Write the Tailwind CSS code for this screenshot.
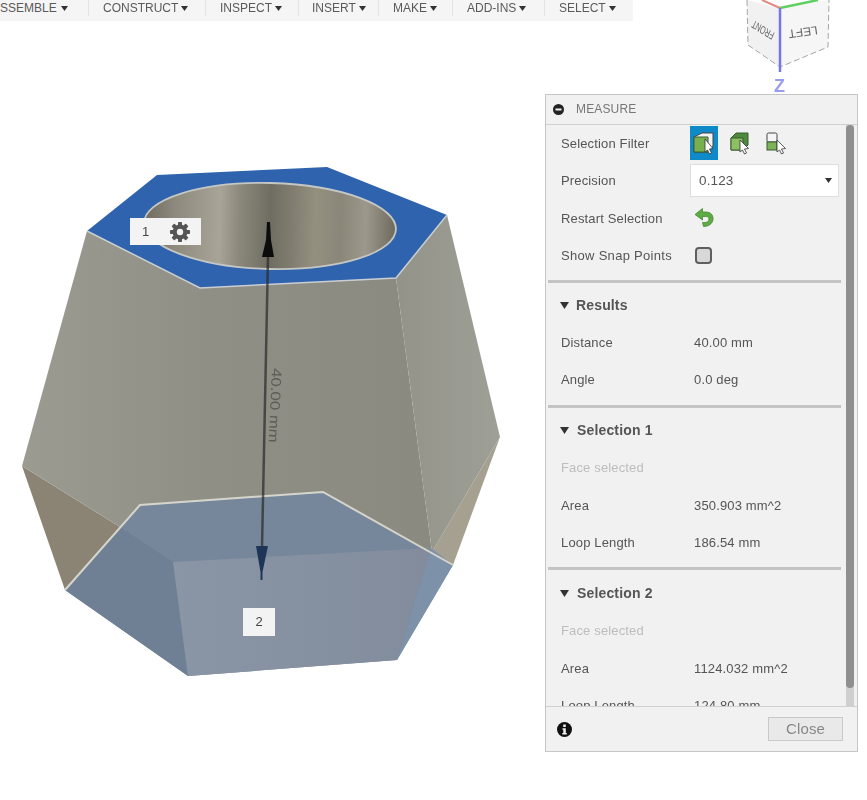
<!DOCTYPE html>
<html lang="en">
<head>
    <meta charset="UTF-8">
    <title>Measure</title>
    <script src="https://cdn.jsdelivr.net/npm/@tailwindcss/browser@4"></script>
</head>
<body class="bg-white">
<div class="relative w-[867px] h-[800px] overflow-hidden bg-white font-['Liberation_Sans',Arial,sans-serif]">

    <!-- Toolbar -->
    <div class="relative z-10 flex w-[633px] h-[21px] bg-[#f5f5f5] text-[12px] text-[#5a5a5a] blur-[0.3px]">
        <div class="w-[89px] h-[16px] flex items-center gap-[4px] border-r border-[#e3e3e3]"><span>SSEMBLE</span><svg width="7" height="5" viewBox="0 0 7 5"><path d="M0 0h7L3.500 5z" fill="#333"/></svg></div>
        <div class="w-[117px] h-[16px] pl-[14px] flex items-center gap-[3px] border-r border-[#e3e3e3]"><span>CONSTRUCT</span><svg width="7" height="5" viewBox="0 0 7 5"><path d="M0 0h7L3.500 5z" fill="#333"/></svg></div>
        <div class="w-[93px] h-[16px] pl-[14px] flex items-center gap-[3px] border-r border-[#e3e3e3]"><span>INSPECT</span><svg width="7" height="5" viewBox="0 0 7 5"><path d="M0 0h7L3.500 5z" fill="#333"/></svg></div>
        <div class="w-[80px] h-[16px] pl-[13px] flex items-center gap-[3px] border-r border-[#e3e3e3]"><span>INSERT</span><svg width="7" height="5" viewBox="0 0 7 5"><path d="M0 0h7L3.500 5z" fill="#333"/></svg></div>
        <div class="w-[74px] h-[16px] pl-[14px] flex items-center gap-[3px] border-r border-[#e3e3e3]"><span>MAKE</span><svg width="7" height="5" viewBox="0 0 7 5"><path d="M0 0h7L3.500 5z" fill="#333"/></svg></div>
        <div class="w-[92px] h-[16px] pl-[14px] flex items-center gap-[3px] border-r border-[#e3e3e3]"><span>ADD-INS</span><svg width="7" height="5" viewBox="0 0 7 5"><path d="M0 0h7L3.500 5z" fill="#333"/></svg></div>
        <div class="h-[16px] pl-[14px] flex items-center gap-[3px]"><span>SELECT</span><svg width="7" height="5" viewBox="0 0 7 5"><path d="M0 0h7L3.500 5z" fill="#333"/></svg></div>
    </div>

    <!-- View cube -->
    <svg class="absolute left-0 top-0 blur-[0.6px]" width="867" height="100" viewBox="0 0 867 100">
        <path d="M747 0 L780 8 L780 67 L748 45 Z" fill="#f1f1f1"/>
        <path d="M780 8 L829 0 L828 47 L780 67 Z" fill="#f6f6f6"/>
        <path d="M747 0 L748 45 L780 67 L828 47 L829 0" fill="none" stroke="#a5a5a5" stroke-width="1" stroke-dasharray="6 3"/>
        <text transform="translate(775 33) rotate(212) skewX(8) scale(0.72 1.1)" font-size="10" fill="#666" font-family="Liberation Sans">FRONT</text>
        <text transform="translate(817 26) rotate(172)" font-size="12" fill="#666" font-family="Liberation Sans">LEFT</text>
        <path d="M762 0 L780 8" stroke="#e08a80" stroke-width="2"/>
        <path d="M780 8 L818 0" stroke="#60d060" stroke-width="2.500"/>
        <path d="M780 8 L780 72" stroke="#7477e6" stroke-width="2.500"/>
        <text x="774" y="92" font-size="18" font-weight="700" fill="#9a9cf0" font-family="Liberation Sans">Z</text>
    </svg>

    <!-- Model -->
    <svg class="absolute left-0 top-0 blur-[0.4px]" width="545" height="800" viewBox="0 0 545 800">
        <defs>
            <linearGradient id="bodyFront" x1="0" x2="1" y1="0" y2="0">
                <stop offset="0" stop-color="#9c9b92"/>
                <stop offset="0.45" stop-color="#908f86"/>
                <stop offset="1" stop-color="#8b8a80"/>
            </linearGradient>
            <linearGradient id="bodyRight" x1="0" x2="1" y1="0" y2="0">
                <stop offset="0" stop-color="#939389"/>
                <stop offset="1" stop-color="#9e9f96"/>
            </linearGradient>
            <linearGradient id="bottomFront" x1="0" x2="1" y1="0" y2="0">
                <stop offset="0" stop-color="#8a95a5"/>
                <stop offset="1" stop-color="#828c9c"/>
            </linearGradient>
            <linearGradient id="hole" x1="0" x2="1" y1="0" y2="0">
                <stop offset="0" stop-color="#6f6b5f"/>
                <stop offset="0.12" stop-color="#8d897c"/>
                <stop offset="0.3" stop-color="#a8a598"/>
                <stop offset="0.38" stop-color="#8b887b"/>
                <stop offset="0.5" stop-color="#6f6c62"/>
                <stop offset="0.68" stop-color="#93907f"/>
                <stop offset="0.78" stop-color="#8a8779"/>
                <stop offset="0.88" stop-color="#9c998c"/>
                <stop offset="1" stop-color="#6d695d"/>
            </linearGradient>
        </defs>
        <!-- tan lower faces -->
        <path d="M22 466 L65 590 L120 527 Z" fill="#8b8373"/>
        <path d="M500 437 L432 552 L453 565 Z" fill="#a5a08f"/>
        <!-- grey faces -->
        <path d="M87 231 L200 288 L396 278 L432 552 L323 500 L140 510 L120 527 L22 466 Z" fill="url(#bodyFront)"/>
        <path d="M396 278 L447 215 L500 437 L432 552 Z" fill="url(#bodyRight)"/>
        <!-- blue lower faces -->
        <path d="M65 590 L140 505 L323 492 L453 565 L397 660 L188 676 Z" fill="#76879c"/>
        <path d="M120 527 L173 562 L188 676 L65 590 Z" fill="#6f8095"/>
        <path d="M173 562 L431 548 L397 660 L188 676 Z" fill="url(#bottomFront)"/>
        <path d="M431 548 L453 565 L397 660 Z" fill="#7d91a9"/>
        <path d="M65 590 L140 505 L323 492 L453 565" fill="none" stroke="#d6d5cc" stroke-width="2"/>
        <!-- top -->
        <path d="M87 231 L157 175 L327 167 L447 215 L396 278 L200 288 Z" fill="#2f63ad"/>
        <path d="M87 231 L200 288 L396 278 L447 215" fill="none" stroke="#c9ced2" stroke-width="1.500"/>
        <ellipse cx="270" cy="226" rx="126" ry="43" fill="url(#hole)" stroke="#c4c7c4" stroke-width="1.800" transform="rotate(1.500 270 226)"/>
        <!-- measure arrow -->
        <path d="M268 257 L262 548" stroke="#2a2a2a" stroke-opacity="0.7" stroke-width="2.500"/>
        <path d="M267 222 L270 222 L271 240 L274 257 L262 257 L266 240 Z" fill="#0c0c0c"/>
        <path d="M256 546 L268 546 L262.500 572 L262.500 580 L260.500 580 L260.500 572 Z" fill="#1f3558"/>
        <text transform="translate(272 368) rotate(92.500) scale(1.200 1)" font-size="14" fill="#5c5c58" font-family="Liberation Sans">40.00 mm</text>
    </svg>

    <!-- Point labels -->
    <div class="absolute left-[130px] top-[218px] w-[71px] h-[27px] bg-[#f3f3f3] flex items-center text-[13px] text-[#444] pl-[12px] blur-[0.3px]">
        <span class="w-[28px]">1</span>
        <svg width="20" height="20" viewBox="0 0 20 20">
            <g fill="#555">
                <rect x="8" y="0" width="4" height="20" rx="0.800"/>
                <rect x="8" y="0" width="4" height="20" rx="0.800" transform="rotate(45 10 10)"/>
                <rect x="8" y="0" width="4" height="20" rx="0.800" transform="rotate(90 10 10)"/>
                <rect x="8" y="0" width="4" height="20" rx="0.800" transform="rotate(135 10 10)"/>
            </g>
            <circle cx="10" cy="10" r="5.700" fill="none" stroke="#555" stroke-width="3.400"/>
            <circle cx="10" cy="10" r="3.200" fill="#f3f3f3"/>
        </svg>
    </div>
    <div class="absolute left-[243px] top-[608px] w-[32px] h-[28px] bg-[#f3f3f3] flex items-center justify-center text-[13px] text-[#444] blur-[0.3px]">2</div>

    <!-- Measure panel -->
    <div class="absolute left-[545px] top-[94px] w-[313px] h-[658px] flex flex-col bg-[#f1f1f1] border border-[#c6c6c6] text-[#555] text-[13px] tracking-[0.15px] blur-[0.3px]">
        <div class="h-[29.5px] shrink-0 flex items-center pl-[7px] border-b border-[#d0d0d0] text-[12px] text-[#777]">
            <svg class="mr-[12px]" width="11" height="11" viewBox="0 0 11 11"><circle cx="5.500" cy="5.500" r="5.500" fill="#222"/><rect x="2.500" y="4.500" width="6" height="2" fill="#f1f1f1"/></svg>
            <span>MEASURE</span>
        </div>

        <div class="flex flex-1 min-h-0">
            <div class="flex-1 min-w-0 overflow-hidden pl-[2px]">
                <div class="h-[37.5px] flex items-center pl-[13px]">
                    <span class="w-[129px]">Selection Filter</span>
                    <div class="flex items-center">
                        <div class="w-[28px] h-[34px] bg-[#0e8ac8] flex items-center justify-center">
                            <svg width="24" height="24" viewBox="0 0 24 24">
                                <path d="M2 6 L10 2 H21 V15 L16 21 H2 Z" fill="#f4f4f4" stroke="#444" stroke-width="1"/>
                                <path d="M2 6 H16 V21 H2 Z" fill="#79b04f" stroke="#3f5f33" stroke-width="1"/>
                                <path d="M13 8 V21 L15.500 19 L17.500 23 L19.500 22 L17.500 18 L21 17.500 Z" fill="#fff" stroke="#333" stroke-width="0.800"/>
                            </svg>
                        </div>
                        <svg class="ml-[11px]" width="24" height="24" viewBox="0 0 24 24">
                            <path d="M2 7 L7 2 H19 V14 L14 19 H2 Z" fill="#4d8a3c" stroke="#3a5a30" stroke-width="1"/>
                            <path d="M2 7 H14 V19 H2 Z" fill="#8cc063" stroke="#3a5a30" stroke-width="1"/>
                            <path d="M11 9 V21 L13.500 19 L15.500 23 L17.500 22 L15.500 18 L19.500 17.500 Z" fill="#fff" stroke="#333" stroke-width="0.800"/>
                        </svg>
                        <svg class="ml-[12px]" width="24" height="24" viewBox="0 0 24 24">
                            <rect x="2" y="2" width="10" height="9" rx="1.500" fill="#f5f5f5" stroke="#444" stroke-width="1"/>
                            <rect x="2" y="11" width="10" height="8" fill="#7cb356" stroke="#3a5a30" stroke-width="1"/>
                            <path d="M12 9 V21 L14.500 19 L16.500 23 L18.500 22 L16.500 18 L20.500 17.500 Z" fill="#fff" stroke="#333" stroke-width="0.800"/>
                        </svg>
                    </div>
                </div>
                <div class="h-[37.5px] flex items-center pl-[13px]">
                    <span class="w-[129px]">Precision</span>
                    <div class="w-[149px] h-[33px] bg-white border border-[#dedede] flex items-center justify-between pl-[8px] pr-[6px] text-[13.500px]">
                        <span>0.123</span>
                        <svg width="7" height="5" viewBox="0 0 7 5"><path d="M0 0h7L3.500 5z" fill="#333"/></svg>
                    </div>
                </div>
                <div class="h-[37.5px] flex items-center pl-[13px]">
                    <span class="w-[133px]">Restart Selection</span>
                    <svg width="20" height="20" viewBox="0 0 20 20">
                        <path d="M1 6.500 L8.500 0.500 L8.500 4 L12 4 C17 4 19.500 7.500 19 11.500 C18.500 15.500 15 18.500 9.500 18.500 L8.500 14.500 C12 15 15 14 15 11 C15 9 13.500 8.500 11.500 8.500 L8.500 8.500 L8.500 12 Z" fill="#5cab44" stroke="#468a30" stroke-width="0.800"/>
                    </svg>
                </div>
                <div class="h-[37.5px] flex items-center pl-[13px]">
                    <span class="w-[134px] tracking-[0.3px] whitespace-nowrap">Show Snap Points</span>
                    <div class="w-[17px] h-[17px] rounded-[4px] border-2 border-[#5f5f5f] bg-[#d8d8d8]"></div>
                </div>
                <div class="h-[3px] mt-[5.5px] mb-[3.25px] bg-[#c4c4c4]"></div>

                <div class="h-[37.5px] flex items-center pl-[12px] font-bold text-[14px]"><svg class="mr-[7px]" width="9" height="7" viewBox="0 0 9 7"><path d="M0 0h9L4.500 7z" fill="#333"/></svg>Results</div>
                <div class="h-[37.5px] flex items-center pl-[13px]"><span class="w-[133px]">Distance</span><span>40.00 mm</span></div>
                <div class="h-[37.5px] flex items-center pl-[13px]"><span class="w-[133px]">Angle</span><span>0.0 deg</span></div>
                <div class="h-[3px] mt-[6px] mb-[4px] bg-[#c4c4c4]"></div>

                <div class="h-[37.5px] flex items-center pl-[12px] font-bold text-[14px]"><svg class="mr-[8px]" width="9" height="7" viewBox="0 0 9 7"><path d="M0 0h9L4.500 7z" fill="#333"/></svg>Selection 1</div>
                <div class="h-[37.5px] flex items-center pl-[13px] text-[#bdbdbd]">Face selected</div>
                <div class="h-[37.5px] flex items-center pl-[13px]"><span class="w-[133px]">Area</span><span>350.903 mm^2</span></div>
                <div class="h-[37.5px] flex items-center pl-[13px]"><span class="w-[133px]">Loop Length</span><span>186.54 mm</span></div>
                <div class="h-[3px] mt-[5.5px] mb-[4.5px] bg-[#c4c4c4]"></div>

                <div class="h-[37.5px] flex items-center pl-[12px] font-bold text-[14px]"><svg class="mr-[8px]" width="9" height="7" viewBox="0 0 9 7"><path d="M0 0h9L4.500 7z" fill="#333"/></svg>Selection 2</div>
                <div class="h-[37.5px] flex items-center pl-[13px] text-[#bdbdbd]">Face selected</div>
                <div class="h-[37.5px] flex items-center pl-[13px]"><span class="w-[133px]">Area</span><span>1124.032 mm^2</span></div>
                <div class="h-[37.5px] flex items-center pl-[13px]"><span class="w-[133px]">Loop Length</span><span>124.80 mm</span></div>
            </div>

            <!-- Scrollbar -->
            <div class="w-[8px] ml-[5px] mr-[3px] bg-[#cfcfcf] shrink-0">
                <div class="h-[563px] bg-[#8f8f8f] rounded-[4px]"></div>
            </div>
        </div>

        <div class="h-[45px] shrink-0 border-t border-[#d0d0d0] flex items-center justify-between pl-[11px] pr-[14px]">
            <svg width="15" height="15" viewBox="0 0 15 15">
                <circle cx="7.500" cy="7.500" r="7.500" fill="#111"/>
                <rect x="6.200" y="2.500" width="2.600" height="2.500" fill="#f1f1f1"/>
                <path d="M5.500 6.300 H8.800 V11 H9.800 V12.500 H5.300 V11 H6.300 V7.700 H5.500 Z" fill="#f1f1f1"/>
            </svg>
            <div class="w-[75px] h-[24px] bg-[#e9e9e9] border border-[#c9c9c9] flex items-center justify-center text-[15px] text-[#888]">Close</div>
        </div>
    </div>
</div>
</body>
</html>
